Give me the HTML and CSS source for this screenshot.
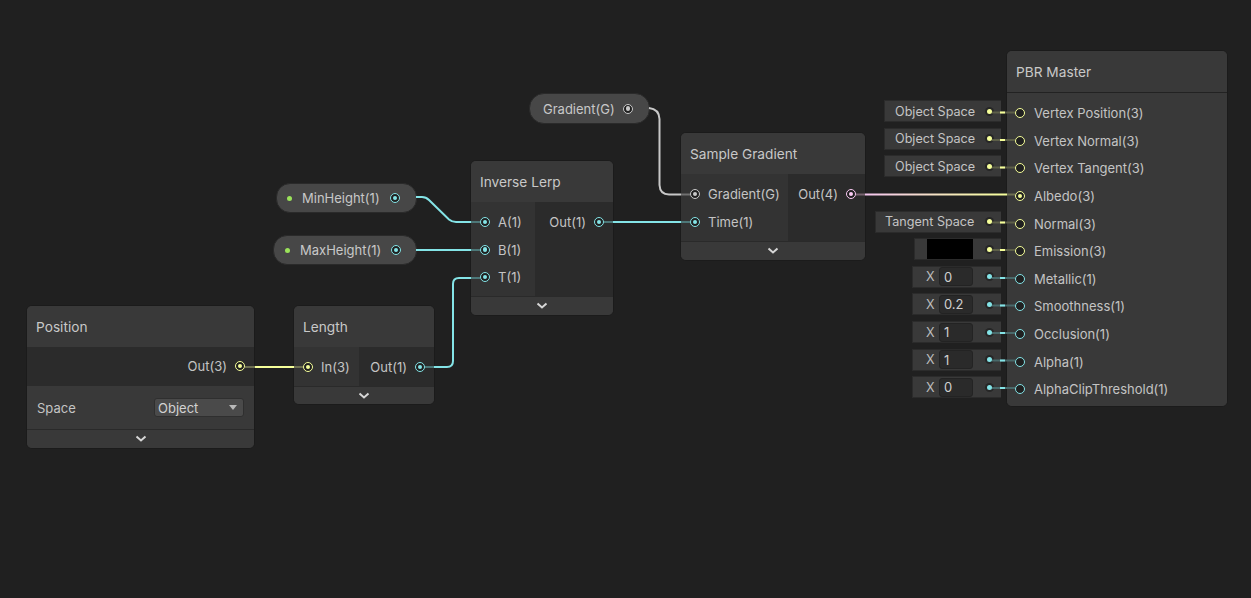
FILE: index.html
```html
<!DOCTYPE html>
<html>
<head>
<meta charset="utf-8">
<link rel="stylesheet" href="styles.css">
</head>
<body>
<div class="canvas">

  <!-- Property pills -->
  <div class="pill pill-min">
    <span class="exposed"></span><span class="pill-label">MinHeight(1)</span><span class="port cyan on"></span>
  </div>
  <div class="pill pill-max">
    <span class="exposed"></span><span class="pill-label">MaxHeight(1)</span><span class="port cyan on"></span>
  </div>
  <div class="pill pill-grad">
    <span class="pill-label">Gradient(G)</span><span class="port gray on"></span>
  </div>

  <!-- Position -->
  <div class="node n-position">
    <div class="title">Position</div>
    <div class="out-row">
      <span class="label">Out(3)</span><span class="port yellow on"></span>
    </div>
    <div class="control-row">
      <span class="label">Space</span>
      <div class="dropdown"><span>Object</span><span class="tri"></span></div>
    </div>
    <div class="collapse"><svg width="12" height="8" viewBox="0 0 12 8"><polyline points="1.5,1.5 6,5.5 10.5,1.5" /></svg></div>
  </div>

  <!-- Length -->
  <div class="node n-length">
    <div class="title">Length</div>
    <div class="body">
      <div class="col-in">
        <div class="row"><span class="port yellow on"></span><span class="label">In(3)</span></div>
      </div>
      <div class="col-out">
        <div class="row"><span class="label">Out(1)</span><span class="port cyan on"></span></div>
      </div>
    </div>
    <div class="collapse"><svg width="12" height="8" viewBox="0 0 12 8"><polyline points="1.5,1.5 6,5.5 10.5,1.5" /></svg></div>
  </div>

  <!-- Inverse Lerp -->
  <div class="node n-ilerp">
    <div class="title">Inverse Lerp</div>
    <div class="body">
      <div class="col-in">
        <div class="row"><span class="port cyan on"></span><span class="label">A(1)</span></div>
        <div class="row"><span class="port cyan on"></span><span class="label">B(1)</span></div>
        <div class="row"><span class="port cyan on"></span><span class="label">T(1)</span></div>
      </div>
      <div class="col-out">
        <div class="row"><span class="label">Out(1)</span><span class="port cyan on"></span></div>
      </div>
    </div>
    <div class="collapse"><svg width="12" height="8" viewBox="0 0 12 8"><polyline points="1.5,1.5 6,5.5 10.5,1.5" /></svg></div>
  </div>

  <!-- Sample Gradient -->
  <div class="node n-sample">
    <div class="title">Sample Gradient</div>
    <div class="body">
      <div class="col-in">
        <div class="row"><span class="port gray on"></span><span class="label">Gradient(G)</span></div>
        <div class="row"><span class="port cyan on"></span><span class="label">Time(1)</span></div>
      </div>
      <div class="col-out">
        <div class="row"><span class="label">Out(4)</span><span class="port pink on"></span></div>
      </div>
    </div>
    <div class="collapse"><svg width="12" height="8" viewBox="0 0 12 8"><polyline points="1.5,1.5 6,5.5 10.5,1.5" /></svg></div>
  </div>

  <!-- PBR Master default value fields -->
  <div class="defaults">
    <div class="drow"><div class="dbox w-obj"><span class="dtext">Object Space</span><span class="ddot yellow"></span></div></div>
    <div class="drow"><div class="dbox w-obj"><span class="dtext">Object Space</span><span class="ddot yellow"></span></div></div>
    <div class="drow"><div class="dbox w-obj"><span class="dtext">Object Space</span><span class="ddot yellow"></span></div></div>
    <div class="drow"></div>
    <div class="drow"><div class="dbox w-tan"><span class="dtext">Tangent Space</span><span class="ddot yellow"></span></div></div>
    <div class="drow"><div class="dbox w-em"><span class="swatch"></span><span class="ddot yellow"></span></div></div>
    <div class="drow"><div class="dbox w-x"><span class="xl">X</span><span class="field">0</span><span class="ddot cyan"></span></div></div>
    <div class="drow"><div class="dbox w-x"><span class="xl">X</span><span class="field">0.2</span><span class="ddot cyan"></span></div></div>
    <div class="drow"><div class="dbox w-x"><span class="xl">X</span><span class="field">1</span><span class="ddot cyan"></span></div></div>
    <div class="drow"><div class="dbox w-x"><span class="xl">X</span><span class="field">1</span><span class="ddot cyan"></span></div></div>
    <div class="drow"><div class="dbox w-x"><span class="xl">X</span><span class="field">0</span><span class="ddot cyan"></span></div></div>
  </div>

  <!-- PBR Master -->
  <div class="node n-pbr">
    <div class="title title-sep">PBR Master</div>
    <div class="pbr-body">
      <div class="prow"><span class="port yellow"></span><span class="label">Vertex Position(3)</span></div>
      <div class="prow"><span class="port yellow"></span><span class="label">Vertex Normal(3)</span></div>
      <div class="prow"><span class="port yellow"></span><span class="label">Vertex Tangent(3)</span></div>
      <div class="prow"><span class="port yellow on"></span><span class="label">Albedo(3)</span></div>
      <div class="prow"><span class="port yellow"></span><span class="label">Normal(3)</span></div>
      <div class="prow"><span class="port yellow"></span><span class="label">Emission(3)</span></div>
      <div class="prow"><span class="port cyan"></span><span class="label">Metallic(1)</span></div>
      <div class="prow"><span class="port cyan"></span><span class="label">Smoothness(1)</span></div>
      <div class="prow"><span class="port cyan"></span><span class="label">Occlusion(1)</span></div>
      <div class="prow"><span class="port cyan"></span><span class="label">Alpha(1)</span></div>
      <div class="prow"><span class="port cyan"></span><span class="label">AlphaClipThreshold(1)</span></div>
    </div>
  </div>

  <!-- Edges -->
  <svg class="edges" width="1251" height="598" viewBox="0 0 1251 598">
    <defs>
      <linearGradient id="pinkYellow" gradientUnits="userSpaceOnUse" x1="866" y1="0" x2="1007" y2="0">
        <stop offset="0" stop-color="#f4c6ee"/>
        <stop offset="1" stop-color="#f6ff9a"/>
      </linearGradient>
    </defs>
    <g fill="none" stroke-width="2" stroke-linecap="butt">
      <path class="dim-y" d="M245 367 H255"/>
      <path stroke="#f6ff9a" d="M255 367 H294"/>
      <path class="dim-y" d="M294 367 H303"/>
      <path class="dim-c" d="M425 367 H434"/>
      <path stroke="#84e4e7" d="M434 367 H447 Q453 367 453 361 V284 Q453 278 459 278 H471"/>
      <path class="dim-c" d="M471 278 H480"/>
      <path stroke="#84e4e7" d="M416 197 H422 Q426 197 429 200 L449 219.5 Q452 222 456 222 H471"/>
      <path class="dim-c" d="M471 222 H480"/>
      <path stroke="#84e4e7" d="M416 250 H471"/>
      <path class="dim-c" d="M471 250 H480"/>
      <path class="dim-c" d="M604 222 H613"/>
      <path stroke="#84e4e7" d="M613 222 H681"/>
      <path class="dim-c" d="M681 222 H690"/>
      <path stroke="#c8c8c8" d="M649 108 Q659 109 659.5 119 V185 Q660 194.5 669 194.5 H681"/>
      <path class="dim-g" d="M681 194.5 H690"/>
      <path class="dim-p" d="M856 194.5 H865"/>
      <path stroke="url(#pinkYellow)" d="M865 194.5 H1007"/>
      <path class="dim-y" d="M1007 194.5 H1015"/>
    </g>
    <g fill="none" stroke-width="2">
      <path class="con-y" d="M992 112.5 H1015 M992 140 H1015 M992 167.5 H1015 M992 222.5 H1015 M992 250 H1015"/>
      <path stroke="#f6ff9a" d="M1000 112.5 H1005 M1000 140 H1005 M1000 167.5 H1005 M1000 222.5 H1005 M1000 250 H1005"/>
      <path class="con-c" d="M992 278 H1015 M992 305.5 H1015 M992 333 H1015 M992 360.5 H1015 M992 388 H1015"/>
      <path stroke="#84e4e7" d="M1000 278 H1005 M1000 305.5 H1005 M1000 333 H1005 M1000 360.5 H1005 M1000 388 H1005"/>
    </g>
  </svg>

</div>
</body>
</html>
```

FILE: styles.css
```css
* { box-sizing: border-box; }

html, body {
  margin: 0;
  padding: 0;
  background: #202020;
}

.canvas {
  position: relative;
  width: 1251px;
  height: 598px;
  overflow: hidden;
  background: #202020;
  font-family: Inter, "Noto Sans", "DejaVu Sans", sans-serif;
  font-size: 13px;
  color: #c4c4c4;
}

/* ---------- nodes ---------- */
.node {
  position: absolute;
  display: flex;
  flex-direction: column;
  background: #393939;
  border: 1px solid #1b1b1b;
  border-radius: 6px;
  overflow: hidden;
}

.n-position { left: 26px; top: 305px; width: 229px; height: 144px; }
.n-length   { left: 293px; top: 305px; width: 142px; height: 100px; }
.n-ilerp    { left: 470px; top: 160px; width: 144px; height: 156px; }
.n-sample   { left: 680px; top: 132px; width: 186px; height: 129px; }
.n-pbr      { left: 1006px; top: 50px; width: 222px; height: 357px; }

.title {
  height: 41px;
  flex: none;
  display: flex;
  align-items: center;
  padding-left: 9px;
  font-size: 13.7px;
  color: #c8c8c8;
  background: #393939;
}

.title-sep {
  height: 42px;
  border-bottom: 1px solid #222222;
}

.label {
  white-space: nowrap;
  color: #c4c4c4;
  font-size: 13px;
}

.body {
  display: flex;
  height: 39px;
  flex: none;
}
.n-ilerp .body { height: 94px; }
.n-sample .body { height: 67px; }

.col-in {
  background: #333333;
  padding: 6px 0 5px 9px;
  display: flex;
  flex-direction: column;
}
.col-out {
  flex: 1;
  background: #2b2b2b;
  padding: 6px 9px 5px 0;
  display: flex;
  flex-direction: column;
  align-items: flex-end;
}
.n-length .col-in { width: 65px; }
.n-ilerp .col-in  { width: 64px; }
.n-sample .col-in { width: 107px; }

.row {
  height: 28px;
  display: flex;
  align-items: center;
  gap: 8px;
}

.out-row {
  height: 39px;
  flex: none;
  background: #2b2b2b;
  display: flex;
  align-items: center;
  justify-content: flex-end;
  gap: 8px;
  padding: 0 9px 1px 0;
}

.control-row {
  height: 43px;
  flex: none;
  display: flex;
  align-items: center;
  justify-content: space-between;
  padding: 0 10px 0 10px;
  background: #393939;
}

.dropdown {
  width: 90px;
  height: 19px;
  background: #4a4a4a;
  border: 1px solid #2f2f2f;
  border-radius: 3px;
  display: flex;
  align-items: center;
  justify-content: space-between;
  padding: 0 6px 0 3px;
  color: #d2d2d2;
}
.tri {
  width: 0;
  height: 0;
  border-left: 4.5px solid transparent;
  border-right: 4.5px solid transparent;
  border-top: 5px solid #b8b8b8;
}

.collapse {
  flex: 1;
  border-top: 1px solid #2a2a2a;
  background: #393939;
  display: flex;
  align-items: center;
  justify-content: center;
}
.collapse svg polyline {
  fill: none;
  stroke: #d6d6d6;
  stroke-width: 2;
}

/* ---------- ports ---------- */
.port {
  flex: none;
  position: relative;
  width: 10px;
  height: 10px;
  border-radius: 50%;
  border: 1.3px solid #f6ff9a;
  background: #202020;
}
.port.on::after {
  content: "";
  position: absolute;
  left: 50%;
  top: 50%;
  width: 4.5px;
  height: 4.5px;
  margin: -2.25px 0 0 -2.25px;
  border-radius: 50%;
  background: currentColor;
}
.port.yellow { border-color: #f6ff9a; color: #f6ff9a; }
.port.cyan   { border-color: #84e4e7; color: #84e4e7; }
.port.pink   { border-color: #fbcbf4; color: #fbcbf4; }
.port.gray   { border-color: #c8c8c8; color: #c8c8c8; }

/* ---------- property pills ---------- */
.pill {
  position: absolute;
  height: 28px;
  border-radius: 14px;
  background: #474747;
  border: 1px solid #2a2a2a;
  display: flex;
  align-items: center;
  color: #c8c8c8;
  font-size: 13px;
}
.pill-min  { left: 276px; top: 183px; width: 141px; height: 30px; padding: 0 16px 0 10px; }
.pill-max  { left: 273px; top: 235px; width: 144px; height: 30px; padding: 0 15px 0 11px; }
.pill-grad { left: 529px; top: 93px; width: 121px; height: 31px; padding: 0 16px 0 13px; border-radius: 15px; }

.exposed {
  width: 5px;
  height: 5px;
  border-radius: 50%;
  background: #9be35a;
  margin-right: 10px;
  flex: none;
}
.pill-label { white-space: nowrap; }
.pill .port { margin-left: auto; }

/* ---------- PBR body ---------- */
.pbr-body {
  flex: 1;
  background: #393939;
  padding: 6.5px 0 0 8px;
  display: flex;
  flex-direction: column;
}
.prow {
  height: 27.6px;
  display: flex;
  align-items: center;
  gap: 9px;
}

/* ---------- default value fields ---------- */
.defaults {
  position: absolute;
  left: 860px;
  top: 92px;
  width: 141px;
  padding-top: 6.5px;
  display: flex;
  flex-direction: column;
}
.drow {
  height: 27.6px;
  display: flex;
  align-items: center;
  justify-content: flex-end;
  padding-bottom: 2px;
}
.dbox {
  height: 22px;
  background: #393939;
  border: 1px solid #2b2b2b;
  border-right: none;
  display: flex;
  align-items: center;
  padding-right: 9.5px;
  color: #c4c4c4;
  font-size: 12.6px;
}
.w-obj { width: 117px; padding-left: 10px; }
.w-tan { width: 126px; padding-left: 9px; }
.w-em  { width: 87px; padding-left: 12px; }
.w-x   { width: 89px; padding-left: 13px; }

.dtext { white-space: nowrap; }
.ddot {
  margin-left: auto;
  width: 5px;
  height: 5px;
  border-radius: 50%;
  box-shadow: 0 0 0 2px #262626;
  flex: none;
}
.ddot.yellow { background: #f6ff9a; }
.ddot.cyan   { background: #84e4e7; }

.swatch {
  width: 46px;
  height: 20px;
  background: #000000;
}
.xl {
  width: 13px;
  color: #bdbdbd;
}
.field {
  width: 34px;
  height: 19px;
  margin-left: 0;
  background: #2a2a2a;
  border: 1px solid #232323;
  border-radius: 3px;
  padding-left: 4px;
  display: flex;
  align-items: center;
  color: #d0d0d0;
  font-size: 13px;
}

/* ---------- edges ---------- */
.edges {
  position: absolute;
  left: 0;
  top: 0;
  pointer-events: none;
}
.dim-y { stroke: #6e7052; }
.dim-c { stroke: #4c7778; }
.dim-g { stroke: #707070; }
.dim-p { stroke: #76636f; }
.con-y { stroke: #5d5f48; }
.con-c { stroke: #49696a; }
```
